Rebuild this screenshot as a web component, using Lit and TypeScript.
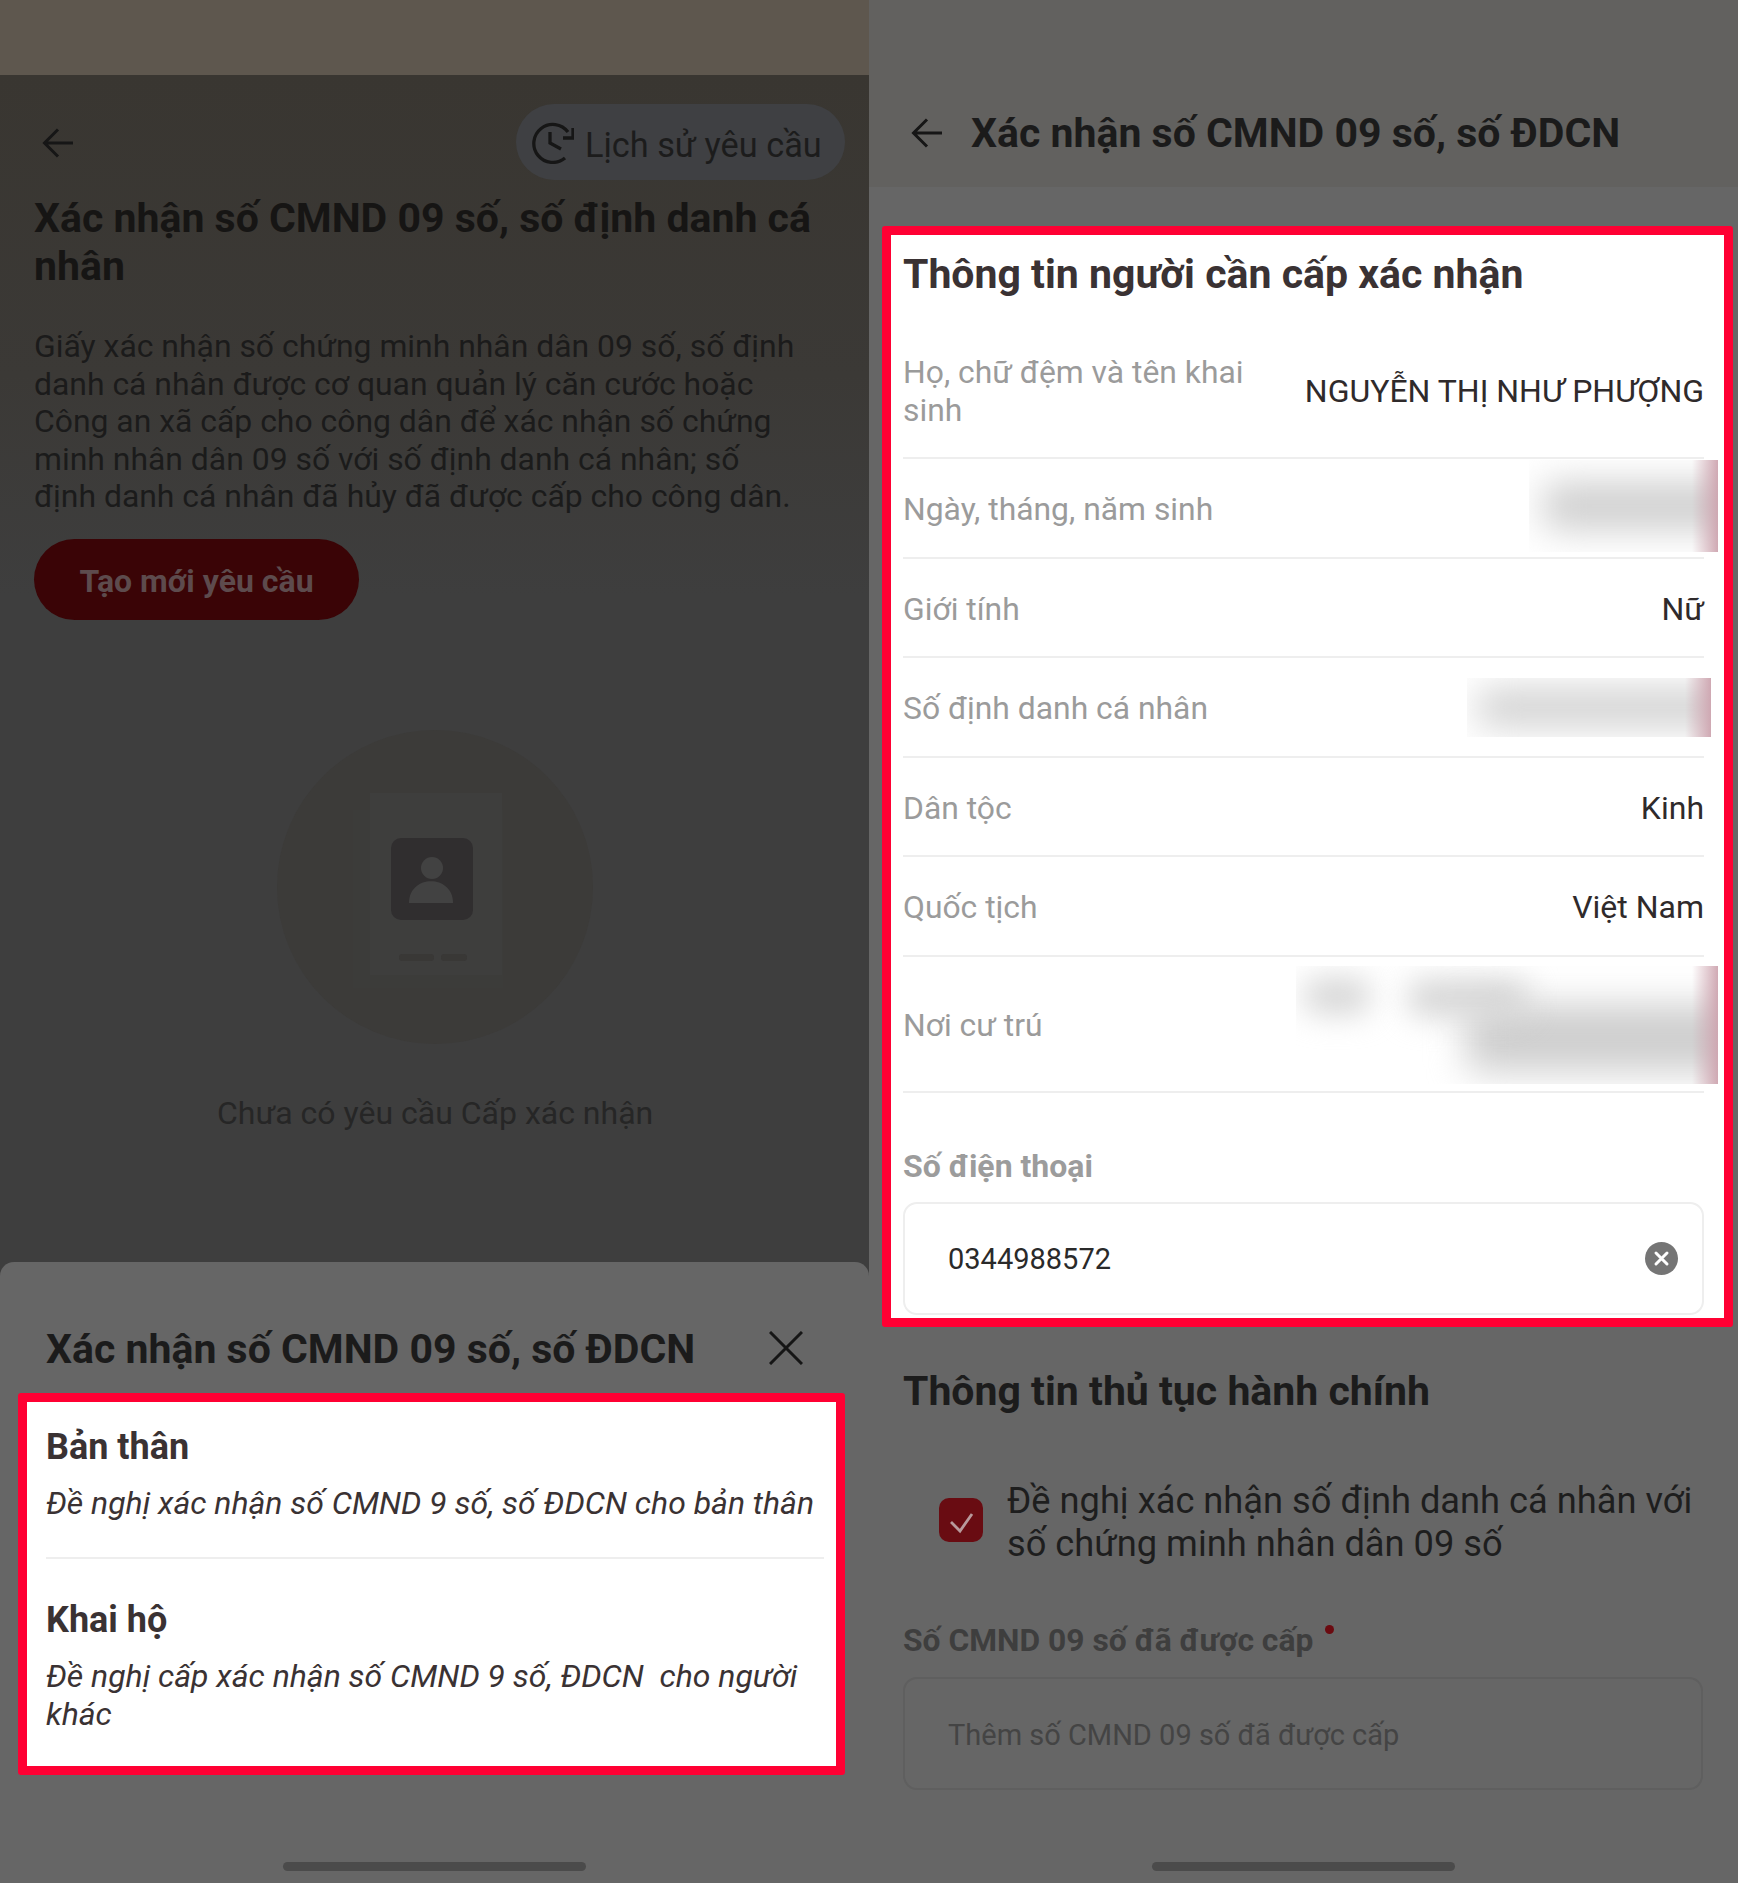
import { LitElement, html, css, svg } from "lit";
import { customElement } from "lit/decorators.js";

const arrow = svg`<path d="M31 15H3M16 1.5 2.5 15 16 28.5" fill="none" stroke="currentColor" stroke-width="3"/>`;

@customElement("app-root")
export class AppRoot extends LitElement {
  static styles = css`
    :host { display: block; width: 1738px; height: 1883px; overflow: hidden; font-family: Roboto, "Noto Sans", sans-serif; }
    .page { display: flex; width: 1738px; height: 1883px; }
    .left, .right { width: 869px; height: 1883px; flex: none; display: flex; flex-direction: column; position: relative; overflow: hidden; }
    .left { background: #3e3e3e; }
    .right { background: #666; }
    .status { height: 75px; flex: none; background: #5e574e; }
    .dim-top { background: linear-gradient(#393631, #3b3936 300px, #3e3e3e 520px); flex: 1; min-height: 0; display: flex; flex-direction: column; padding: 29px 24px 0 34px; }
    .lhead { display: flex; justify-content: space-between; align-items: center; height: 76px; flex: none; }
    .back { display: block; width: 34px; height: 30px; color: #161616; margin-left: 8px; }
    .lhead .back { margin-top: 2px; }
    .pill { display: flex; align-items: center; width: 329px; height: 76px; box-sizing: border-box; padding-left: 14px; gap: 11px; border-radius: 38px; background: #3f4043; color: #1c1c1c; font-size: 34.3px; }
    .pill svg { width: 44px; height: 44px; }
    .pill span { padding-top: 6px; }
    h1 { margin: 0; font-weight: 700; font-size: 41px; line-height: 48px; color: #161514; }
    .lhead + h1 { margin-top: 14px; }
    .desc { margin: 38px 0 0; font-size: 31.9px; line-height: 37.5px; color: #1b1b1b; width: 770px; }
    .cta { margin-top: 23px; width: 325px; height: 81px; border-radius: 41px; background: #3a0406; color: #5d4b4d; font-size: 32px; font-weight: 700; display: flex; align-items: center; justify-content: center; flex: none; padding-top: 3px; box-sizing: border-box; }
    .illus { display: block; width: 316px; height: 314px; margin: 110px 0 0 243px; flex: none; }
    .empty { margin: 50px 0 0 183px; font-size: 32px; line-height: 38px; color: #262626; }
    .sheet { height: 621px; flex: none; background: #666; border-radius: 14px 14px 0 0; display: flex; flex-direction: column; align-items: stretch; box-sizing: border-box; padding-top: 63px; }
    .sheet-head { display: flex; justify-content: space-between; align-items: center; padding: 0 66px 0 46px; height: 48px; flex: none; }
    .sheet-head svg { width: 34px; height: 34px; color: #161616; margin-bottom: 2px; }
    .h2 { font-weight: 700; font-size: 41px; line-height: 48px; color: #1b1b1b; white-space: nowrap; }
    .frame { border: 9px solid #ff0033; border-radius: 3px; background: #fff; box-sizing: border-box; flex: none; }
    .frame.opts { margin: 20px 24px 0 18px; height: 382px; padding: 0 12px 0 19px; }
    .opt-a { padding-top: 25px; height: 157px; box-sizing: border-box; border-bottom: 2px solid #eee; }
    .opt-b { padding-top: 41px; }
    .opt-t { font-size: 36px; line-height: 40px; font-weight: 700; color: #3a3233; }
    .opt-s { font-size: 31.95px; line-height: 37.5px; font-style: italic; color: #3a3233; margin-top: 18px; }
    .homebar { width: 303px; height: 9px; border-radius: 5px; background: #4b4b4b; position: absolute; left: 283px; bottom: 12px; }
    .rtop { height: 187px; flex: none; background: #62615f; display: flex; align-items: center; padding: 78px 0 0 42px; box-sizing: border-box; gap: 26px; }
    .rtop .back { margin: 0; }
    .frame.info { margin: 39px 5px 0 13px; height: 1101px; padding: 0 20px 0 12px; }
    .info-h { font-weight: 700; font-size: 41px; line-height: 48px; color: #3a3233; padding-top: 15px; height: 86px; box-sizing: border-box; }
    .row { position: relative; display: flex; justify-content: space-between; align-items: center; border-bottom: 2px solid #eee; height: 99.5px; padding-top: 3px; box-sizing: border-box; font-size: 32px; line-height: 38px; color: #2f2a2b; }
    .row.first { height: 138px; }
    .row.tall { height: 136px; }
    .row > span:first-child { color: #9b9b9b; width: 345px; font-size: 31.85px; }
    .row > span.nw { white-space: nowrap; }
    .patch { position: absolute; top: 1px; overflow: hidden; background: #fff; }
    .patch::before { content: ""; position: absolute; background: #cfcfcf; filter: blur(18px); border-radius: 12px; }
    .patch::after { content: ""; position: absolute; top: 0; right: 0; bottom: 0; width: 26px; background: linear-gradient(90deg, rgba(206,165,176,0), rgba(206,165,176,.95)); }
    .p1 { left: 626px; width: 189px; height: 92px; }
    .p1::before { left: 14px; right: -30px; top: 22px; bottom: 22px; }
    .p2 { left: 564px; width: 244px; height: 59px; top: 20px; }
    .p2::before { left: 10px; right: -30px; top: 11px; bottom: 11px; }
    .p3 { left: 393px; width: 422px; height: 118px; top: 9px; }
    .p3::before { left: 170px; right: -30px; top: 38px; bottom: 12px; }
    .p3 .blob { position: absolute; left: 8px; top: 12px; width: 66px; height: 36px; background: #d6d6d6; filter: blur(15px); border-radius: 14px; }
    .p3 .blob.b2 { left: 112px; width: 120px; top: 14px; height: 36px; background: #d4d4d4; }
    .flabel { font-weight: 700; font-size: 32px; line-height: 38px; color: #9c9c9c; margin-top: 54px; }
    .input { margin-top: 17px; height: 113px; box-sizing: border-box; border: 2px solid #eee; border-radius: 14px; display: flex; align-items: center; justify-content: space-between; padding: 0 24px 0 43px; font-size: 29px; color: #2a2a2a; }
    .input span { padding-top: 2px; }
    .clear { width: 33px; height: 33px; }
    .rbody { padding: 40px 35px 0 34px; display: flex; flex-direction: column; }
    .r-h { font-weight: 700; font-size: 41px; line-height: 48px; color: #1c1c1c; }
    .check { display: flex; align-items: center; margin: 64px 0 0 36px; gap: 24px; font-size: 36.25px; line-height: 43px; color: #1e1e1e; }
    .box { width: 44px; height: 44px; border-radius: 10px; background: #690c12; flex: none; margin-bottom: 4px; }
    .box svg { display: block; width: 44px; height: 44px; }
    .req { position: relative; display: inline-block; font-weight: 700; font-size: 31.8px; line-height: 38px; color: #3e3e3e; margin-top: 56px; align-self: flex-start; }
    .dot { position: absolute; right: -21px; top: 4px; width: 9px; height: 9px; border-radius: 50%; background: #6b0a10; }
    .input.dim { border-color: #5f5f5f; color: #444; margin-top: 18px; }
  `;

  render() {
    return html`<div class="page">
      <section class="left">
        <div class="status"></div>
        <div class="dim-top">
          <div class="lhead">
            <svg class="back" viewBox="0 0 34 30">${arrow}</svg>
            <div class="pill">
              <svg viewBox="0 0 44 44"><path d="M35 38A19 19 0 1 1 38 12M43 8v10H33M20 12v11l11 6" fill="none" stroke="#161616" stroke-width="3.3"/></svg>
              <span>Lịch sử yêu cầu</span>
            </div>
          </div>
          <h1>Xác nhận số CMND 09 số, số định danh cá nhân</h1>
          <p class="desc">Giấy xác nhận số chứng minh nhân dân 09 số, số định danh cá nhân được cơ quan quản lý căn cước hoặc Công an xã cấp cho công dân để xác nhận số chứng minh nhân dân 09 số với số định danh cá nhân; số định danh cá nhân đã hủy đã được cấp cho công dân.</p>
          <div class="cta">Tạo mới yêu cầu</div>
          <svg class="illus" viewBox="0 0 316 314">
            <ellipse cx="158" cy="157" rx="158" ry="157" fill="#3c3b39"/>
            <rect x="76" y="80" width="150" height="178" fill="#3c3c3a"/>
            <rect x="93" y="63" width="132" height="182" fill="#3e3e3d"/>
            <rect x="114" y="108" width="82" height="82" rx="10" fill="#302e2f"/>
            <circle cx="155" cy="138" r="11" fill="#424242"/>
            <path d="M132 173c0-29 44-29 44 0z" fill="#424242"/>
            <rect x="122" y="224" width="35" height="7" rx="3" fill="#393836"/>
            <rect x="164" y="224" width="26" height="7" rx="3" fill="#393836"/>
          </svg>
          <div class="empty">Chưa có yêu cầu Cấp xác nhận</div>
        </div>
        <div class="sheet">
          <div class="sheet-head">
            <span class="h2">Xác nhận số CMND 09 số, số ĐDCN</span>
            <svg viewBox="0 0 34 34"><path d="M1 1l32 32M33 1 1 33" fill="none" stroke="currentColor" stroke-width="3"/></svg>
          </div>
          <div class="frame opts">
            <div class="opt-a">
              <div class="opt-t">Bản thân</div>
              <div class="opt-s">Đề nghị xác nhận số CMND 9 số, số ĐDCN cho bản thân</div>
            </div>
            <div class="opt-b">
              <div class="opt-t">Khai hộ</div>
              <div class="opt-s">Đề nghị cấp xác nhận số CMND 9 số, ĐDCN&nbsp; cho người khác</div>
            </div>
          </div>
        </div>
        <div class="homebar"></div>
      </section>
      <section class="right">
        <div class="rtop">
          <svg class="back" viewBox="0 0 34 30">${arrow}</svg>
          <span class="h2">Xác nhận số CMND 09 số, số ĐDCN</span>
        </div>
        <div class="frame info">
          <div class="info-h">Thông tin người cần cấp xác nhận</div>
          <div class="row first"><span>Họ, chữ đệm và tên khai sinh</span><span>NGUYỄN THỊ NHƯ PHƯỢNG</span></div>
          <div class="row"><span class="nw">Ngày, tháng, năm sinh</span><div class="patch p1"></div></div>
          <div class="row"><span class="nw">Giới tính</span><span>Nữ</span></div>
          <div class="row"><span class="nw">Số định danh cá nhân</span><div class="patch p2"></div></div>
          <div class="row"><span class="nw">Dân tộc</span><span>Kinh</span></div>
          <div class="row"><span class="nw">Quốc tịch</span><span>Việt Nam</span></div>
          <div class="row tall"><span class="nw">Nơi cư trú</span><div class="patch p3"><div class="blob"></div><div class="blob b2"></div></div></div>
          <div class="flabel">Số điện thoại</div>
          <div class="input"><span>0344988572</span>
            <svg class="clear" viewBox="0 0 33 33"><circle cx="16.5" cy="16.5" r="16.5" fill="#757575"/><path d="M11 11l11 11M22 11 11 22" stroke="#fff" stroke-width="3" stroke-linecap="round"/></svg>
          </div>
        </div>
        <div class="rbody">
          <div class="r-h">Thông tin thủ tục hành chính</div>
          <div class="check">
            <div class="box"><svg viewBox="0 0 44 44"><path d="M12 24l9 9 12-17" fill="none" stroke="#b89a9c" stroke-width="2.8"/></svg></div>
            <span>Đề nghị xác nhận số định danh cá nhân với số chứng minh nhân dân 09 số</span>
          </div>
          <div class="req">Số CMND 09 số đã được cấp<i class="dot"></i></div>
          <div class="input dim"><span>Thêm số CMND 09 số đã được cấp</span></div>
        </div>
        <div class="homebar"></div>
      </section>
    </div>`;
  }
}
